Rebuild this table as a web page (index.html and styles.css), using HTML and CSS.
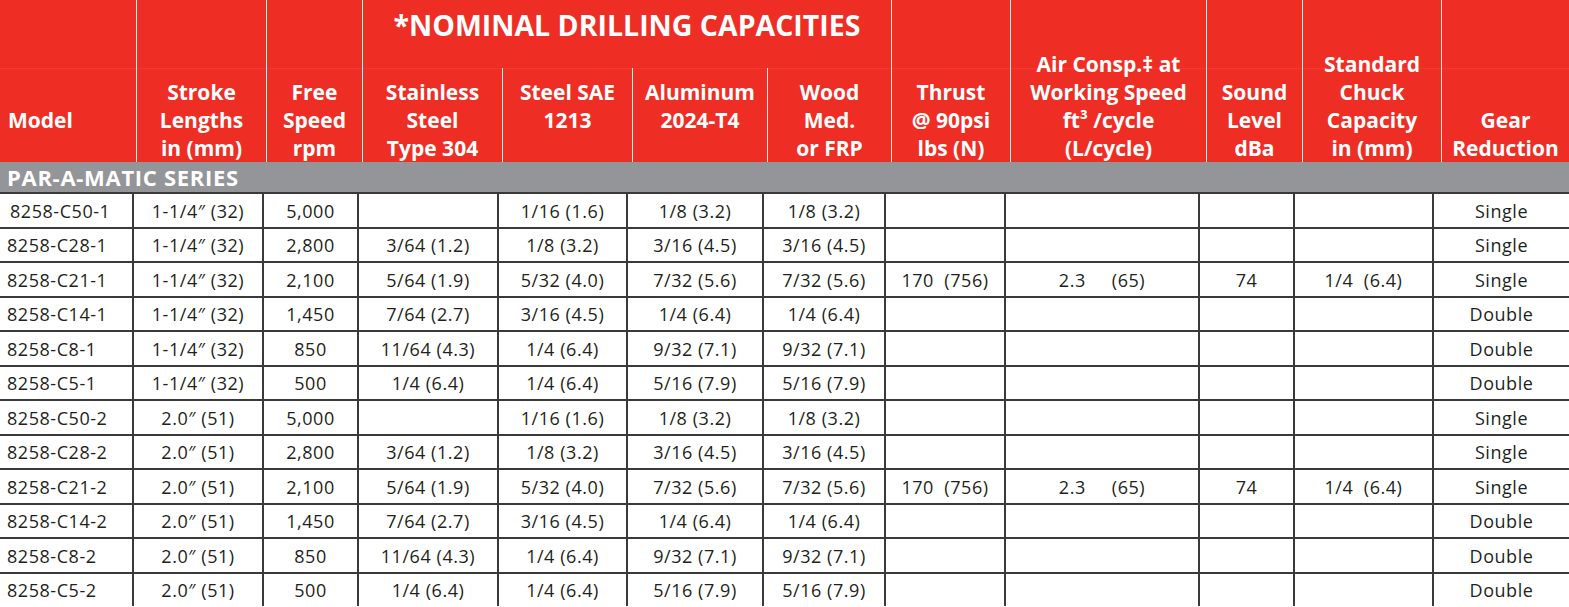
FILE: index.html
```html
<!DOCTYPE html>
<html lang="en">
<head>
<meta charset="utf-8">
<title>Par-A-Matic Series</title>
<link rel="stylesheet" href="styles.css">
</head>
<body>
<div class="sheet">
  <div class="head">
    <div class="h h-model">Model</div>
    <div class="h h-full col2">Stroke<br>Lengths<br>in (mm)</div>
    <div class="h h-full col3">Free<br>Speed<br>rpm</div>
    <div class="h-title">*NOMINAL DRILLING CAPACITIES</div>
    <div class="h h-sub col4">Stainless<br>Steel<br>Type 304</div>
    <div class="h h-sub col5">Steel SAE<br>1213</div>
    <div class="h h-sub col6">Aluminum<br>2024-T4</div>
    <div class="h h-sub col7">Wood<br>Med.<br>or FRP</div>
    <div class="h h-full col8">Thrust<br>@ 90psi<br>lbs (N)</div>
    <div class="h h-full col9">Air Consp.‡ at<br>Working Speed<br>ft³ /cycle<br>(L/cycle)</div>
    <div class="h h-full col10">Sound<br>Level<br>dBa</div>
    <div class="h h-full col11">Standard<br>Chuck<br>Capacity<br>in (mm)</div>
    <div class="h h-full col12">Gear<br>Reduction</div>
  </div>
  <div class="series">PAR-A-MATIC SERIES</div>
  <div class="grid">
    <div class="c model first">8258-C50-1</div><div class="c">1-1/4″ (32)</div><div class="c">5,000</div><div class="c"></div><div class="c">1/16 (1.6)</div><div class="c">1/8 (3.2)</div><div class="c">1/8 (3.2)</div><div class="c"></div><div class="c"></div><div class="c"></div><div class="c"></div><div class="c gear">Single</div>
    <div class="c model">8258-C28-1</div><div class="c">1-1/4″ (32)</div><div class="c">2,800</div><div class="c">3/64 (1.2)</div><div class="c">1/8 (3.2)</div><div class="c">3/16 (4.5)</div><div class="c">3/16 (4.5)</div><div class="c"></div><div class="c"></div><div class="c"></div><div class="c"></div><div class="c gear">Single</div>
    <div class="c model">8258-C21-1</div><div class="c">1-1/4″ (32)</div><div class="c">2,100</div><div class="c">5/64 (1.9)</div><div class="c">5/32 (4.0)</div><div class="c">7/32 (5.6)</div><div class="c">7/32 (5.6)</div><div class="c pre">170  (756)</div><div class="c air"><span>2.3</span><span class="air-l">(65)</span></div><div class="c">74</div><div class="c pre">1/4  (6.4)</div><div class="c gear">Single</div>
    <div class="c model">8258-C14-1</div><div class="c">1-1/4″ (32)</div><div class="c">1,450</div><div class="c">7/64 (2.7)</div><div class="c">3/16 (4.5)</div><div class="c">1/4 (6.4)</div><div class="c">1/4 (6.4)</div><div class="c"></div><div class="c"></div><div class="c"></div><div class="c"></div><div class="c gear">Double</div>
    <div class="c model">8258-C8-1</div><div class="c">1-1/4″ (32)</div><div class="c">850</div><div class="c">11/64 (4.3)</div><div class="c">1/4 (6.4)</div><div class="c">9/32 (7.1)</div><div class="c">9/32 (7.1)</div><div class="c"></div><div class="c"></div><div class="c"></div><div class="c"></div><div class="c gear">Double</div>
    <div class="c model">8258-C5-1</div><div class="c">1-1/4″ (32)</div><div class="c">500</div><div class="c">1/4 (6.4)</div><div class="c">1/4 (6.4)</div><div class="c">5/16 (7.9)</div><div class="c">5/16 (7.9)</div><div class="c"></div><div class="c"></div><div class="c"></div><div class="c"></div><div class="c gear">Double</div>
    <div class="c model">8258-C50-2</div><div class="c">2.0″ (51)</div><div class="c">5,000</div><div class="c"></div><div class="c">1/16 (1.6)</div><div class="c">1/8 (3.2)</div><div class="c">1/8 (3.2)</div><div class="c"></div><div class="c"></div><div class="c"></div><div class="c"></div><div class="c gear">Single</div>
    <div class="c model">8258-C28-2</div><div class="c">2.0″ (51)</div><div class="c">2,800</div><div class="c">3/64 (1.2)</div><div class="c">1/8 (3.2)</div><div class="c">3/16 (4.5)</div><div class="c">3/16 (4.5)</div><div class="c"></div><div class="c"></div><div class="c"></div><div class="c"></div><div class="c gear">Single</div>
    <div class="c model">8258-C21-2</div><div class="c">2.0″ (51)</div><div class="c">2,100</div><div class="c">5/64 (1.9)</div><div class="c">5/32 (4.0)</div><div class="c">7/32 (5.6)</div><div class="c">7/32 (5.6)</div><div class="c pre">170  (756)</div><div class="c air"><span>2.3</span><span class="air-l">(65)</span></div><div class="c">74</div><div class="c pre">1/4  (6.4)</div><div class="c gear">Single</div>
    <div class="c model">8258-C14-2</div><div class="c">2.0″ (51)</div><div class="c">1,450</div><div class="c">7/64 (2.7)</div><div class="c">3/16 (4.5)</div><div class="c">1/4 (6.4)</div><div class="c">1/4 (6.4)</div><div class="c"></div><div class="c"></div><div class="c"></div><div class="c"></div><div class="c gear">Double</div>
    <div class="c model">8258-C8-2</div><div class="c">2.0″ (51)</div><div class="c">850</div><div class="c">11/64 (4.3)</div><div class="c">1/4 (6.4)</div><div class="c">9/32 (7.1)</div><div class="c">9/32 (7.1)</div><div class="c"></div><div class="c"></div><div class="c"></div><div class="c"></div><div class="c gear">Double</div>
    <div class="c model">8258-C5-2</div><div class="c">2.0″ (51)</div><div class="c">500</div><div class="c">1/4 (6.4)</div><div class="c">1/4 (6.4)</div><div class="c">5/16 (7.9)</div><div class="c">5/16 (7.9)</div><div class="c"></div><div class="c"></div><div class="c"></div><div class="c"></div><div class="c gear">Double</div>
  </div>
</div>
</body>
</html>
```

FILE: styles.css
```css
html, body {
  margin: 0;
  padding: 0;
  background: #ffffff;
}

.sheet {
  width: 1569px;
  height: 607px;
  overflow: hidden;
  font-family: "Open Sans", "Noto Sans", sans-serif;
}

/* ---------- header ---------- */
.head {
  display: grid;
  grid-template-columns: 136px 130px 96px 140px 130px 135px 124px 119px 196px 96px 139px 128px;
  grid-template-rows: 68px 94px;
  height: 162px;
  background: linear-gradient(to bottom, #ee2e24 0, #ee2e24 68px, #ef3b31 68px, #ef3b31 69px, #ee2e24 69px);
  color: #ffffff;
  font-weight: 700;
  font-size: 21px;
  line-height: 28px;
}

.h {
  display: flex;
  flex-direction: column;
  align-items: center;
  text-align: center;
  white-space: nowrap;
}

.h-full {
  grid-row: 1 / 3;
  justify-content: flex-end;
  border-left: 1px solid rgba(255, 255, 255, 0.9);
}

.h-model {
  grid-column: 1;
  grid-row: 1 / 3;
  justify-content: flex-end;
  align-items: flex-start;
  padding: 0 0 28px 8px;
}

.h-title {
  grid-column: 4 / 8;
  grid-row: 1;
  border-left: 1px solid rgba(255, 255, 255, 0.9);
  display: flex;
  justify-content: center;
  align-items: center;
  padding-bottom: 18px;
  font-size: 28.5px;
  line-height: 34px;
  white-space: nowrap;
}

.h-sub {
  grid-row: 2;
  justify-content: flex-start;
  padding-top: 10px;
  border-left: 1px solid rgba(255, 255, 255, 0.9);
}

.col2 { grid-column: 2; }
.col3 { grid-column: 3; }
.col4 { grid-column: 4; }
.col5 { grid-column: 5; }
.col6 { grid-column: 6; }
.col7 { grid-column: 7; }
.col8 { grid-column: 8; }
.col9 { grid-column: 9; }
.col10 { grid-column: 10; }
.col11 { grid-column: 11; }
.col12 { grid-column: 12; }

/* ---------- series band ---------- */
.series {
  height: 30px;
  background: #939598;
  color: #ffffff;
  font-weight: 700;
  font-size: 22px;
  line-height: 31px;
  padding-left: 7px;
  letter-spacing: 0.7px;
}

/* ---------- body ---------- */
.grid {
  display: grid;
  grid-template-columns: 134px 130px 95px 140px 129px 136px 122px 120px 194px 95px 139px 135px;
  grid-auto-rows: 34.5px;
  color: #231f20;
  font-size: 18px;
}

.c {
  box-sizing: border-box;
  border-top: 2px solid #3a3a3a;
  border-right: 2px solid #3a3a3a;
  display: flex;
  align-items: center;
  justify-content: center;
  white-space: nowrap;
  letter-spacing: 0.55px;
  padding-top: 1px;
}

.c.gear {
  border-right: none;
}

.c.model {
  justify-content: flex-start;
  padding-left: 7px;
}

.c.model.first {
  padding-left: 10px;
}

.c.pre {
  white-space: pre;
}

.air-l {
  margin-left: 26px;
}
```
